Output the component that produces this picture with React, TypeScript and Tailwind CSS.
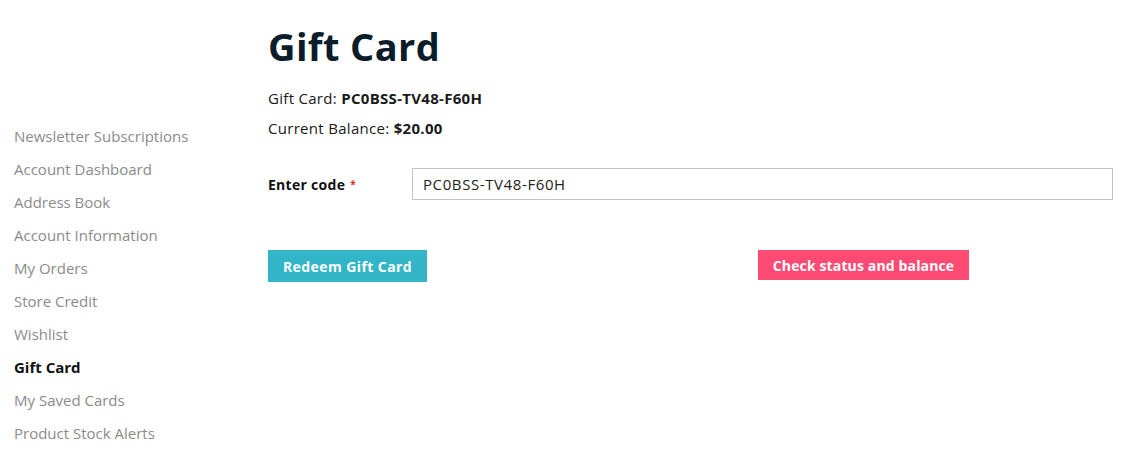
const navItems = [
  'Newsletter Subscriptions',
  'Account Dashboard',
  'Address Book',
  'Account Information',
  'My Orders',
  'Store Credit',
  'Wishlist',
  'Gift Card',
  'My Saved Cards',
  'Product Stock Alerts',
]

function Sidebar() {
  return (
    <nav className="w-[268px] shrink-0 pl-[14px] pt-[120px]">
      <ul>
        {navItems.map((item) => (
          <li
            key={item}
            className={
              item === 'Gift Card'
                ? 'flex h-[33px] items-center text-[15px] font-bold text-[#111]'
                : 'flex h-[33px] items-center text-[15px] text-[#8b8b8b]'
            }
          >
            {item}
          </li>
        ))}
      </ul>
    </nav>
  )
}

export default function App() {
  return (
    <div className="flex min-h-[476px] bg-white font-['Open_Sans',sans-serif] text-[#1a1a1a]">
      <Sidebar />
      <main className="w-[845px] pt-[18px]">
        <h1 className="text-[38px] font-bold leading-[56px] tracking-[0.01em] text-[#0b1c2a]">
          Gift Card
        </h1>
        <div className="mt-[9px] text-[15px] tracking-[0.02em]">
          <p className="leading-[30px]">
            Gift Card: <strong>PC0BSS-TV48-F60H</strong>
          </p>
          <p className="leading-[30px]">
            Current Balance: <strong>$20.00</strong>
          </p>
        </div>

        <div className="mt-[25px] flex items-center">
          <label className="flex w-[144px] items-center text-[14px] font-bold tracking-[0.02em] text-[#111]">
            Enter code
            <span className="ml-[5px] text-[10px] text-[#e02b27]">*</span>
          </label>
          <input
            defaultValue="PC0BSS-TV48-F60H"
            className="h-[32px] flex-1 border border-[#c2c2c2] px-[10px] text-[15px] tracking-[0.04em] text-[#222] outline-none"
          />
        </div>

        <div className="mt-[50px] flex items-start">
          <button className="h-[32px] w-[159px] bg-[#33b5c8] text-[14px] font-bold tracking-[0.03em] text-white">
            Redeem Gift Card
          </button>
          <button className="ml-[331px] h-[30px] w-[211px] bg-[#ff4a74] text-[14px] font-bold tracking-[0.01em] text-white">
            Check status and balance
          </button>
        </div>
      </main>
    </div>
  )
}
